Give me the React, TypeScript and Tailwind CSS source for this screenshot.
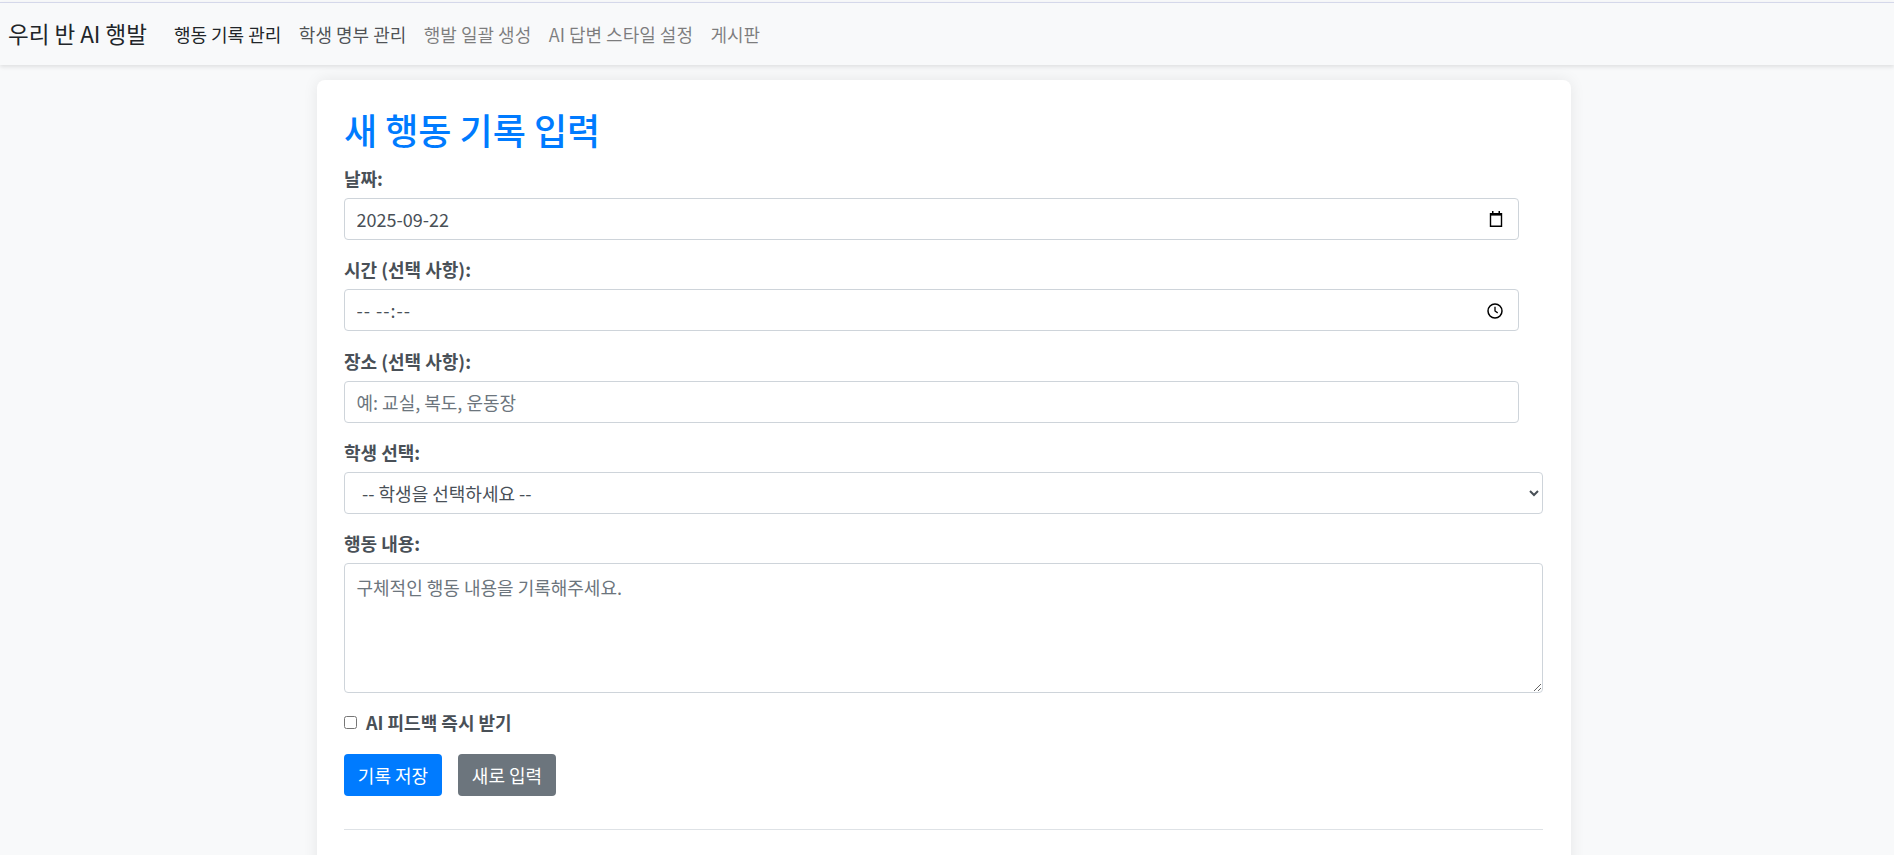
import React from 'react';

const font = { fontFamily: '"Noto Sans CJK KR", "Noto Sans", sans-serif' };

function CalendarIcon() {
  return (
    <svg width="14" height="16" viewBox="0 0 14 16" className="text-black">
      <path d="M3 0h1.5v2h5V0H11v2h2.2v14H.8V2H3z" fill="currentColor" />
      <rect x="2.2" y="4.6" width="9.6" height="9.9" fill="white" />
    </svg>
  );
}

function ClockIcon() {
  return (
    <svg width="16" height="16" viewBox="0 0 16 16" fill="none" stroke="black">
      <circle cx="8" cy="8" r="7" strokeWidth="1.5" />
      <path d="M8 3.8V8l2.7 1.9" strokeWidth="1.3" />
    </svg>
  );
}

function Label({ children }: { children: React.ReactNode }) {
  return <label className="block text-[18px] leading-[27px] font-bold text-[#495057] mb-[6px]">{children}</label>;
}

const fieldClass =
  'block h-[42px] border border-[#ced4da] rounded-[4px] bg-white text-[18px] text-[#495057] placeholder:text-[#6c757d] outline-none';

function App() {
  return (
    <div className="bg-[#f8f9fa] overflow-hidden h-[855px]" style={font}>
      <nav className="h-[63px] border-t border-t-[#d5d8ea] mt-[2px] bg-[#f8f9fa] shadow-[0_2px_4px_rgba(0,0,0,0.1)] flex items-center pl-[8px]">
        <a className="text-[22.5px] text-[#212529] mr-[18.25px]">우리 반 AI 행발</a>
        <a className="text-[18px] text-[#212529] px-[8.75px]">행동 기록 관리</a>
        <a className="text-[18px] text-[#212529]/80 px-[8.75px]">학생 명부 관리</a>
        <a className="text-[18px] text-[#00000080] px-[8.75px]">행발 일괄 생성</a>
        <a className="text-[18px] text-[#00000080] px-[8.75px]">AI 답변 스타일 설정</a>
        <a className="text-[18px] text-[#00000080] px-[8.75px]">게시판</a>
      </nav>

      <div className="pr-[6px] pt-[15px]">
        <main className="mx-auto w-[1254px] bg-white rounded-[8px] shadow-[0_0_15px_rgba(0,0,0,0.08)] pl-[27px] pr-[28px] pt-[27px] pb-[60px]">
          <h1 className="text-[36px] leading-[45px] font-medium text-[#007bff] mb-[13px]">새 행동 기록 입력</h1>

          <form>
            <Label>날짜:</Label>
            <div className="relative w-[1175px] mb-[16.25px]">
              <input readOnly value="2025-09-22" className={fieldClass + ' w-full px-[11.5px]'} />
              <span className="absolute right-[16px] top-[13px]">
                <CalendarIcon />
              </span>
            </div>

            <Label>시간 (선택 사항):</Label>
            <div className="relative w-[1175px] mb-[16.25px]">
              <input readOnly value="-- --:--" className={fieldClass + ' w-full px-[11.5px] tracking-[1px]'} />
              <span className="absolute right-[16px] top-[14px]">
                <ClockIcon />
              </span>
            </div>

            <Label>장소 (선택 사항):</Label>
            <input placeholder="예: 교실, 복도, 운동장" className={fieldClass + ' w-[1175px] px-[11.5px] mb-[16.25px]'} />

            <Label>학생 선택:</Label>
            <select className={fieldClass + ' w-full pl-[13px] pr-3 mb-[16.25px]'}>
              <option>-- 학생을 선택하세요 --</option>
            </select>

            <Label>행동 내용:</Label>
            <textarea
              placeholder="구체적인 행동 내용을 기록해주세요."
              className="block w-full h-[130px] border border-[#ced4da] rounded-[4px] bg-white px-[11.5px] py-[10px] text-[18px] text-[#495057] placeholder:text-[#6c757d] outline-none mb-[16px]"
            />

            <div className="flex items-center gap-[9px] mb-[18px]">
              <input type="checkbox" className="w-[13px] h-[13px]" />
              <span className="text-[18px] leading-[27px] font-bold text-[#495057]">AI 피드백 즉시 받기</span>
            </div>

            <div className="flex gap-[16px]">
              <button type="button" className="h-[42px] w-[98px] rounded-[4px] bg-[#007bff] text-white text-[18px]">
                기록 저장
              </button>
              <button type="button" className="h-[42px] w-[98px] rounded-[4px] bg-[#6c757d] text-white text-[18px]">
                새로 입력
              </button>
            </div>
          </form>

          <hr className="border-0 border-t border-t-[#dee2e6] mt-[33px]" />
        </main>
      </div>
    </div>
  );
}

export default App;
